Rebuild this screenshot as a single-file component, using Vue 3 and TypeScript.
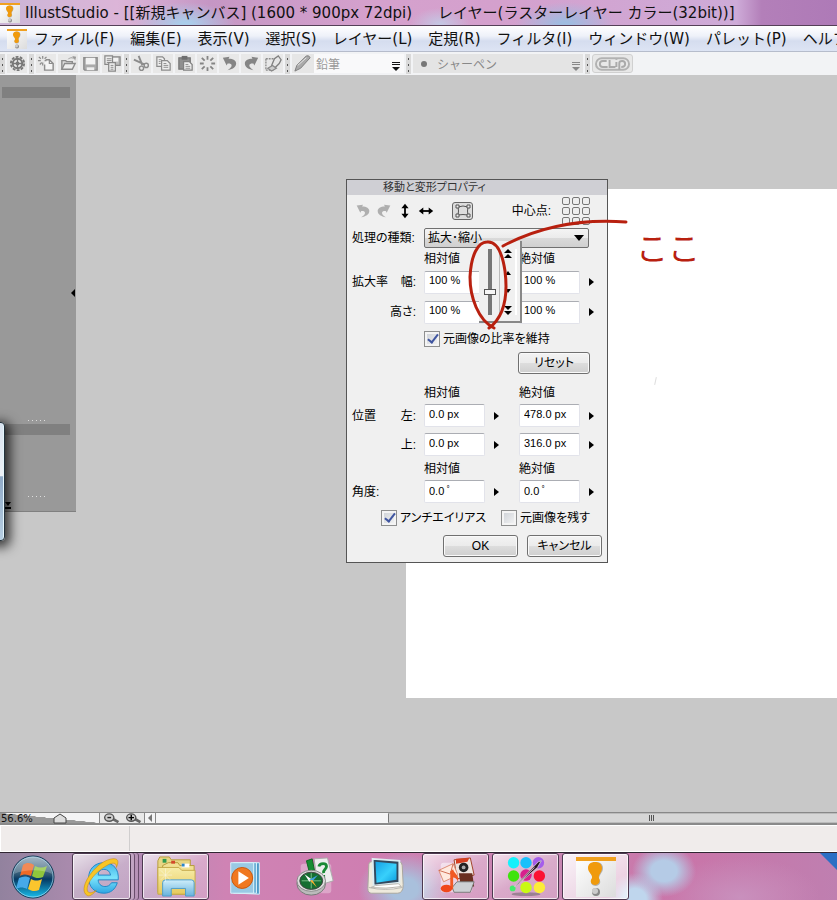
<script setup lang="ts">
import { ref } from 'vue'

const menus = ['ファイル(F)', '編集(E)', '表示(V)', '選択(S)', 'レイヤー(L)', '定規(R)', 'フィルタ(I)', 'ウィンドウ(W)', 'パレット(P)', 'ヘルプ(H)']

interface Tool { icon: string; label: string }
const toolGroups: Tool[][] = [
  [{ icon: 'gear', label: '設定' }],
  [
    { icon: 'new', label: '新規' },
    { icon: 'open', label: '開く' },
    { icon: 'save', label: '保存' },
    { icon: 'saveas', label: '別名で保存' },
  ],
  [
    { icon: 'cut', label: '切り取り' },
    { icon: 'copy', label: 'コピー' },
    { icon: 'paste', label: '貼り付け' },
    { icon: 'burst', label: '消去' },
    { icon: 'undo', label: '取り消し' },
    { icon: 'redo', label: 'やり直し' },
    { icon: 'fill', label: '塗りつぶし' },
  ],
]

interface Row { group: string; name: string; rel: string; abs: string }
const scaleRows = ref<Row[]>([
  { group: '拡大率', name: '幅:', rel: '100 %', abs: '100 %' },
  { group: '', name: '高さ:', rel: '100 %', abs: '100 %' },
])
const positionRows = ref<Row[]>([
  { group: '位置', name: '左:', rel: '0.0 px', abs: '478.0 px' },
  { group: '', name: '上:', rel: '0.0 px', abs: '316.0 px' },
])
const angle = ref<Row>({ group: '角度:', name: '', rel: '0.0 ﾟ', abs: '0.0 ﾟ' })

const keepRatio = ref(true)
const antialias = ref(true)
const keepSource = ref(false)
const scale = ref(33)
const zoom = ref(57)

const tasks = [
  { icon: 'explorer', label: 'エクスプローラー', open: true },
  { icon: 'player', label: 'メディアプレーヤー', open: false },
  { icon: 'compass', label: 'ナビ', open: false },
  { icon: 'monitor', label: 'コンピューター', open: false },
  { icon: 'media', label: 'メディア', open: true },
  { icon: 'paint', label: 'ペイント', open: true },
  { icon: 'illust', label: 'IllustStudio', open: true },
]
</script>

<template>
  <div class="desktop">
    <svg class="defs" aria-hidden="true">
      <defs>
        <linearGradient id="gOrb" x1="0" y1="0" x2="0" y2="1">
          <stop offset="0" stop-color="#8fa6b8" /><stop offset=".45" stop-color="#2b5572" />
          <stop offset=".55" stop-color="#063a63" /><stop offset="1" stop-color="#18c0ee" />
        </linearGradient>
        <linearGradient id="gPaper" x1="0" y1="0" x2="1" y2="1">
          <stop offset="0" stop-color="#fff" /><stop offset="1" stop-color="#dcdcdc" />
        </linearGradient>
        <linearGradient id="gIe" x1="0" y1="0" x2="0" y2="1">
          <stop offset="0" stop-color="#3fb2e8" /><stop offset=".5" stop-color="#7be4fb" /><stop offset="1" stop-color="#2fa5e2" />
        </linearGradient>
        <linearGradient id="gFolder" x1="0" y1="0" x2="0" y2="1">
          <stop offset="0" stop-color="#f7eda9" /><stop offset="1" stop-color="#e6c95c" />
        </linearGradient>
        <linearGradient id="gScreen" x1="0" y1="0" x2="1" y2="1">
          <stop offset="0" stop-color="#16a0e4" /><stop offset=".55" stop-color="#38d0fb" /><stop offset="1" stop-color="#0c9ee0" />
        </linearGradient>
        <linearGradient id="gGlass" x1="0" y1="0" x2="0" y2="1">
          <stop offset="0" stop-color="#cfeefb" /><stop offset="1" stop-color="#66b2dc" />
        </linearGradient>
      </defs>

      <symbol id="illust" viewBox="0 0 40 40">
        <rect width="40" height="40" fill="url(#gPaper)" />
        <rect width="40" height="4" fill="#f0a020" />
        <path d="M13 11c0-4 3-6 7-6s7 2 7 6c0 5-4 6-4 11 2 2 2 6-3 7-5 0-6-4-4-7 1-5-3-6-3-11z" fill="#777" opacity=".5" />
        <path d="M12 11c0-4 3-6 7-6s7 2 7 6c0 5-4 6-3 10 2 4-1 7-4 7s-6-3-3-7c1-4-4-5-4-10z" fill="#f09a0c" />
        <circle cx="20" cy="35" r="4" fill="#888" /><circle cx="19" cy="34" r="3" fill="#ccc" />
      </symbol>

      <symbol id="gear" viewBox="0 0 20 20">
        <circle cx="10" cy="10" r="5" fill="none" stroke="#777" stroke-width="2" />
        <circle cx="10" cy="10" r="7" fill="none" stroke="#777" stroke-width="2" stroke-dasharray="3 1.4" />
        <path d="M10 5v10M5 10h10" stroke="#777" stroke-width="1.4" /><circle cx="10" cy="10" r="2" fill="#777" />
      </symbol>
      <symbol id="new" viewBox="0 0 20 20">
        <path d="M9 6h4l4 4v7H8v-6" fill="#f4f4f4" stroke="#8c8c8c" stroke-width="1.5" />
        <path d="M13 6v4h4M6 2v3M6 9v3M1 7h3M8 7h2M2 3l2 2M10 3L8 5M3 11l2-2" fill="none" stroke="#8c8c8c" stroke-width="1.3" />
      </symbol>
      <symbol id="open" viewBox="0 0 20 20">
        <path d="M3 16V7h4l1 1h6v2" fill="#ddd" stroke="#8c8c8c" stroke-width="1.5" />
        <path d="M3 16l3-6h11l-3 6z" fill="#eee" stroke="#8c8c8c" stroke-width="1.5" />
        <path d="M9 6c2-3 5-3 6-2l-1-2 4 1-1 4-1-2c-2-1-4-1-7 1z" fill="#999" />
      </symbol>
      <symbol id="save" viewBox="0 0 20 20">
        <path d="M3 4h14v13H4l-1-1z" fill="#aaa" stroke="#8c8c8c" stroke-width="1.5" />
        <path d="M5 4h10v7H5z" fill="#f2f2f2" /><path d="M6 14h8v3H6z" fill="#eee" />
      </symbol>
      <symbol id="saveas" viewBox="0 0 20 20">
        <path d="M7 3h11v9h-5" fill="#bbb" stroke="#888" stroke-width="1.3" /><path d="M10 4h6v4h-6z" fill="#f2f2f2" />
        <path d="M2 2h8v9H2z" fill="#eee" stroke="#888" stroke-width="1.3" /><path d="M4 5h5M4 7h5M4 9h4" stroke="#888" />
        <path d="M6 9h7v9H6z" fill="#eee" stroke="#888" stroke-width="1.3" /><path d="M8 12h3M8 14h3M8 16h3" stroke="#888" />
      </symbol>
      <symbol id="cut" viewBox="0 0 20 20">
        <path d="M7 2l4 10M2 6l11 5" stroke="#8c8c8c" stroke-width="2" fill="none" />
        <circle cx="15" cy="12" r="2.2" fill="none" stroke="#8c8c8c" stroke-width="1.5" />
        <circle cx="10" cy="15" r="2.2" fill="none" stroke="#8c8c8c" stroke-width="1.5" />
      </symbol>
      <symbol id="copy" viewBox="0 0 20 20">
        <path d="M3 3h6l2 2v8H3z" fill="#eee" stroke="#8c8c8c" stroke-width="1.3" />
        <path d="M8 7h6l3 3v7H8z" fill="#eee" stroke="#8c8c8c" stroke-width="1.3" />
        <path d="M5 6h3M5 8h2M5 10h2M10 10h3M10 12h5M10 14h5" stroke="#8c8c8c" />
      </symbol>
      <symbol id="paste" viewBox="0 0 20 20">
        <path d="M3 4h12v12H3z" fill="#8f8f8f" stroke="#777" stroke-width="1.3" /><path d="M6 2h6v4H6z" fill="#6f6f6f" />
        <path d="M8 8h6l3 3v6H8z" fill="#eee" stroke="#808080" stroke-width="1.3" /><path d="M10 11h3M10 13h5M10 15h5" stroke="#8c8c8c" />
      </symbol>
      <symbol id="burst" viewBox="0 0 20 20">
        <path d="M10 2v4M10 14v4M2 10h4M14 10h4M4 4l3 3M13 13l3 3M16 4l-3 3M4 16l3-3" stroke="#858585" stroke-width="1.9" fill="none" />
      </symbol>
      <symbol id="undo" viewBox="0 0 20 20">
        <path d="M3 4l7-1-1 2c5 0 8 2 8 5 0 4-4 6-9 7 3-2 5-4 4-6-1-1-2-1-4-1l-1 2z" fill="#858585" />
      </symbol>
      <symbol id="redo" viewBox="0 0 20 20">
        <path d="M17 4l-7-1 1 2c-5 0-8 2-8 5 0 4 4 6 9 7-3-2-5-4-4-6 1-1 2-1 4-1l1 2z" fill="#858585" />
      </symbol>
      <symbol id="fill" viewBox="0 0 20 20">
        <path d="M2 5h10M2 5v12M2 17h8" stroke="#8c8c8c" stroke-width="1.4" stroke-dasharray="2 1" fill="none" />
        <path d="M8 12l3-7 4-3 3 4-2 4-5 5z" fill="#e6e6e6" stroke="#808080" stroke-width="1.4" />
        <path d="M4 15l5-3 4 3-5 3z" fill="#ccc" stroke="#888" stroke-width="1.3" />
      </symbol>

      <symbol id="mag" viewBox="0 0 18 12">
        <path d="M9 6l7 4" stroke="#666" stroke-width="3" /><ellipse cx="6" cy="5" rx="5" ry="4" fill="#ccc" stroke="#555" stroke-width="1.5" />
      </symbol>

      <symbol id="orb" viewBox="0 0 44 44">
        <circle cx="22" cy="22" r="21" fill="url(#gOrb)" stroke="#163b58" />
        <circle cx="22" cy="22" r="20" fill="none" stroke="#a9d8ee" stroke-opacity=".7" />
        <path d="M12 10c4-3 8-2 11 0l-3 11c-4-2-8-2-11 0z" fill="#ee6a27" />
        <path d="M24 11c4 2 8 2 12 0l-4 11c-4 2-8 1-11-1z" fill="#8fc63c" />
        <path d="M8 23c4-2 8-2 11 0l-3 11c-4-2-7-2-11 0z" fill="#46a9e9" />
        <path d="M20 24c4 2 7 2 11 0l-3 11c-4 2-8 1-11-1z" fill="#fbc52d" />
        <path d="M3 19C4 8 13 2 22 2s18 6 19 17c-9-5-27-5-38 0z" fill="#fff" opacity=".22" />
      </symbol>
      <symbol id="ie" viewBox="0 0 44 44">
        <path d="M24 7c10 0 16 7 15 18H18c0 4 3 7 7 7 3 0 5-1 7-4h6c-2 7-7 11-14 11-10 0-16-7-16-16S14 7 24 7zM18 20h13c-1-4-3-6-7-6s-6 2-6 6z" fill="url(#gIe)" stroke="#1f86c6" />
        <path d="M6 41C-3 35 11 12 26 5c9-4 16-3 11 7 1-5-4-6-10-2C14 17 4 31 7 37c2 3 6 1 9-1-4 5-8 7-10 5z" fill="#f8c526" stroke="#c88b10" stroke-width=".6" />
      </symbol>
      <symbol id="explorer" viewBox="0 0 44 44">
        <path d="M3 5l2-4h10l2 3h20v34H3z" fill="#e8d684" stroke="#b49a3c" />
        <path d="M8 3h4v4H8z" fill="#2f9a50" /><path d="M14 7h10l2 3h15v30H8V10z" fill="#f1e093" stroke="#b49a3c" />
        <path d="M17 5h4v3h-4z" fill="#d4472a" /><path d="M28 8h8v4h-8z" fill="#fff" /><path d="M28 8h3v3h-3z" fill="#2b86c8" />
        <path d="M3 12h22l3 3h14v25H3z" fill="url(#gFolder)" stroke="#c4a848" />
        <path d="M8 42V28q0-3 3-3h27q3 0 3 3v14h-9v-8H17v8z" fill="url(#gGlass)" stroke="#4d9cc8" />
        <path d="M11 13v14M4 20h14M6 15l10 10M16 15L6 25" stroke="#fff" stroke-width=".6" opacity=".7" />
      </symbol>
      <symbol id="player" viewBox="0 0 44 44">
        <path d="M12 8l24-1v33l-22-1z" fill="#4d99c8" stroke="#d9f1fb" /><path d="M9 7h24v32H9z" fill="#70b2d8" stroke="#d9f1fb" />
        <path d="M6 7h24v32H6z" fill="#99c9e4" stroke="#d9f1fb" />
        <circle cx="18" cy="23" r="11" fill="#f07820" stroke="#c95508" /><path d="M14 16l11 7-11 7z" fill="#fff" />
      </symbol>
      <symbol id="compass" viewBox="0 0 44 44">
        <rect x="6" y="8" width="32" height="31" rx="3" fill="#fff" opacity=".3" />
        <path d="M20 3l14-1 6 24-16 5z" fill="#eee" stroke="#aaa" />
        <path d="M12 5l6-2 3 15-5 3z" fill="#178c32" stroke="#0e6521" />
        <path d="M25 11c1-4 8-4 8 0 0 3-4 3-3 7M30 20v3" stroke="#1a8a35" stroke-width="3" fill="none" />
        <ellipse cx="17" cy="29" rx="15" ry="12" fill="#bbb" stroke="#777" /><ellipse cx="17" cy="26" rx="15" ry="11" fill="#ddd" stroke="#888" />
        <ellipse cx="17" cy="26" rx="12" ry="9" fill="#156e31" stroke="#444" />
        <path d="M17 18v16M7 26h20" stroke="#7cc08b" /><path d="M10 19l8 6-3 2z" fill="#fff" /><path d="M24 20l-6 7-3-2z" fill="#3da0e0" /><path d="M16 26l7 7-5-8z" fill="#ffb02d" />
      </symbol>
      <symbol id="monitor" viewBox="0 0 44 44">
        <path d="M4 9q0-3 3-3h28q4 0 4 4l1 20q0 9-6 9H7q-4 0-4-5z" fill="#eeeadd" stroke="#a8a59c" />
        <path d="M8 3l28 2v23L9 31z" fill="#33495e" stroke="#dcecf2" stroke-width="2" /><path d="M11 6l22 2v17l-21 3z" fill="url(#gScreen)" />
        <path d="M4 33q17 4 35 0M11 31l24-2 3 3q-16 3-32 1z" fill="#fff" stroke="#b8b5ad" />
      </symbol>
      <symbol id="media" viewBox="0 0 44 44">
        <rect x="6" y="7" width="33" height="31" rx="3" fill="#fff" opacity=".5" />
        <path d="M20 4l17-2 4 18-18 4z" fill="#eee4df" stroke="#9d3f25" /><path d="M22 3l14-1-2 4-12 2z" fill="#d63f20" />
        <circle cx="30" cy="12" r="5" fill="#222" /><circle cx="30" cy="12" r="2" fill="#aaa" />
        <path d="M4 15l15-7 5 12-15 7z" fill="#ffe9df" stroke="#da8b72" /><path d="M4 15l12 4 3-11" fill="none" stroke="#cf6b50" />
        <path d="M25 18l14 0 2 14H27z" fill="#6a2f20" /><path d="M18 33l5-6h18l-4 11H20z" fill="#cdd0d4" stroke="#777" />
        <path d="M16 34V16l3-2c1 5 7 6 5 13-1-4-4-4-5-5v13" fill="#f15a24" /><ellipse cx="12" cy="34" rx="6" ry="4" fill="#f0481c" />
      </symbol>
      <symbol id="paint" viewBox="0 0 44 44">
        <ellipse cx="22" cy="40" rx="15" ry="2" fill="#555" opacity=".45" />
        <circle cx="9" cy="7" r="6" fill="#16f0fb" /><circle cx="22" cy="7" r="6" fill="#19c0fb" /><circle cx="35" cy="7" r="6" fill="#a45dea" />
        <circle cx="9" cy="21" r="6" fill="#3ee30c" /><circle cx="22" cy="20" r="6" fill="#d8208d" /><circle cx="36" cy="21" r="6" fill="#fb1233" />
        <circle cx="8" cy="34" r="3" fill="#43ec6d" /><circle cx="22" cy="33" r="6" fill="#c9fb13" /><circle cx="36" cy="33" r="6" fill="#fcec38" />
        <path d="M10 32L35 6l3-1-4 7-22 19z" fill="#24131f" stroke="#ddd" stroke-width=".8" /><path d="M15 28L31 12" stroke="#c9a5b9" />
      </symbol>
    </svg>

    <header class="titlebar">
      <svg class="title-icon"><use href="#illust" /></svg>
      <h1><span>IllustStudio - [[新規キャンバス] (1600 * 900px 72dpi)</span><span>レイヤー(ラスターレイヤー カラー(32bit))]</span></h1>
    </header>

    <nav class="menubar">
      <svg class="title-icon"><use href="#illust" /></svg>
      <button v-for="m in menus" :key="m" type="button">{{ m }}</button>
    </nav>

    <div class="toolbar">
      <div v-for="(g, i) in toolGroups" :key="i" class="tool-group">
        <button v-for="t in g" :key="t.icon" type="button" :aria-label="t.label"><svg><use :href="'#' + t.icon" /></svg></button>
      </div>
      <div class="tool-group">
        <button type="button" class="preset pencil">
          <svg class="pen" viewBox="0 0 20 20"><path d="M2 18l2-6L14 2q3-1 4 2L8 15z" fill="#aaa" stroke="#7c7c7c" /><path d="M5 12l9-8" stroke="#e6e6e6" /></svg>
          <span>鉛筆</span>
          <svg class="caret" viewBox="0 0 8 9"><path d="M0 .5h8M0 2.5h8" stroke="#111" /><path d="M0 5h8L4 9z" fill="#111" /></svg>
        </button>
      </div>
      <div class="tool-group">
        <button type="button" class="preset sharp">
          <i class="dot"></i><span>シャーペン</span>
          <svg class="caret" viewBox="0 0 8 9"><path d="M0 .5h8M0 2.5h8" stroke="#888" /><path d="M0 5h8L4 9z" fill="#888" /></svg>
        </button>
      </div>
      <div class="tool-group">
        <button type="button" class="clip" aria-label="CLIP">
          <svg viewBox="0 0 36 16"><rect x="1" y="2" width="34" height="12" rx="6" fill="none" stroke="#b2b2b2" stroke-width="2" /><path d="M12 5H8q-3 0-3 3t3 3h5M15 4v7h6M22 6v5M22 3v1M25 14V7q0-2 3-2 3 0 3 3t-4 3" fill="none" stroke="#aaa" stroke-width="2" /></svg>
        </button>
      </div>
    </div>

    <main class="workspace">
      <section class="canvas"><i class="speck"></i></section>

      <aside class="dock">
        <div class="dock-body">
          <div class="dock-bar"></div>
          <svg class="collapse" viewBox="0 0 4 8"><path d="M4 0v8L0 4z" /></svg>
          <div class="dock-dots"><i v-for="n in 5" :key="n"></i></div>
        </div>
        <div class="dock-body low">
          <div class="dock-bar"></div>
          <div class="dock-dots"><i v-for="n in 5" :key="n"></i></div>
        </div>
        <svg class="dock-end" viewBox="0 0 6 7"><path d="M0 0h6L3 4zM0 5h6v2H0z" /></svg>
      </aside>
      <div class="edge-tab"></div>

      <form class="dialog" @submit.prevent>
        <h2>移動と変形プロパティ</h2>
        <div class="tools">
          <button type="button" aria-label="取り消し"><svg class="faded"><use href="#undo" /></svg></button>
          <button type="button" aria-label="やり直し"><svg class="faded"><use href="#redo" /></svg></button>
          <button type="button" aria-label="上下反転"><svg viewBox="0 0 20 20"><path d="M10 5v10" stroke="#000" stroke-width="2" /><path d="M6 7l4-5 4 5zM6 13l4 5 4-5z" /></svg></button>
          <button type="button" aria-label="左右反転"><svg viewBox="0 0 20 20"><path d="M5 10h10" stroke="#000" stroke-width="2" /><path d="M7 6l-5 4 5 4zM13 6l5 4-5 4z" /></svg></button>
          <button type="button" class="frame" aria-label="変形枠"><svg viewBox="0 0 18 16"><path d="M4 4q5-2 10 0-1 4 0 8-5-1-10 0 1-4 0-8z" fill="none" stroke="#555" /><path d="M2 2h3v3H2zM13 2h3v3h-3zM2 11h3v3H2zM13 11h3v3h-3z" fill="#eee" stroke="#555" /></svg></button>
          <span class="center-label">中心点:</span>
          <div class="anchors"><button v-for="n in 9" :key="n" type="button" :aria-label="'中心点' + n"></button></div>
        </div>

        <div class="row type-row">
          <label for="kind">処理の種類:</label>
          <div class="select-box">
            <select id="kind"><option>拡大･縮小</option></select>
            <svg viewBox="0 0 10 6"><path d="M0 0h10L5 6z" /></svg>
          </div>
        </div>

        <div class="row head"><span></span><span>相対値</span><span>絶対値</span></div>
        <div v-for="(r, i) in scaleRows" :key="'s' + i" class="row field tall">
          <label :for="'s' + i"><span>{{ r.group }}</span><span>{{ r.name }}</span></label>
          <div class="cell"><input :id="'s' + i" v-model="r.rel" type="text" /></div>
          <div class="cell"><input v-model="r.abs" type="text" :aria-label="r.name + '絶対値'" /><button type="button" class="more" aria-label="調整"></button></div>
        </div>
        <div class="check ratio"><label><input v-model="keepRatio" type="checkbox" /><i></i>元画像の比率を維持</label></div>
        <div class="reset"><button type="button" class="push">リセット</button></div>

        <div class="row head next"><span></span><span>相対値</span><span>絶対値</span></div>
        <div v-for="(r, i) in positionRows" :key="'p' + i" class="row field">
          <label :for="'p' + i"><span>{{ r.group }}</span><span>{{ r.name }}</span></label>
          <div class="cell"><input :id="'p' + i" v-model="r.rel" type="text" /><button type="button" class="more" aria-label="調整"></button></div>
          <div class="cell"><input v-model="r.abs" type="text" :aria-label="r.name + '絶対値'" /><button type="button" class="more" aria-label="調整"></button></div>
        </div>
        <div class="row head"><span></span><span>相対値</span><span>絶対値</span></div>
        <div class="row field">
          <label for="angle">{{ angle.group }}</label>
          <div class="cell"><input id="angle" v-model="angle.rel" type="text" /><button type="button" class="more" aria-label="調整"></button></div>
          <div class="cell"><input v-model="angle.abs" type="text" aria-label="角度絶対値" /><button type="button" class="more" aria-label="調整"></button></div>
        </div>
        <div class="check pair">
          <label><input v-model="antialias" type="checkbox" /><i></i>アンチエイリアス</label>
          <label><input v-model="keepSource" type="checkbox" /><i></i>元画像を残す</label>
        </div>
        <div class="actions"><button type="submit" class="push">OK</button><button type="button" class="push">キャンセル</button></div>

        <div class="popup">
          <input v-model="scale" type="range" min="0" max="100" aria-label="拡大率" />
          <div class="steps">
            <button type="button" aria-label="大きく増やす"><svg viewBox="0 0 8 10"><path d="M0 4l4-4 4 4zM0 9l4-4 4 4z" /></svg></button>
            <button type="button" aria-label="増やす"><svg viewBox="0 0 8 10"><path d="M1 7l3-4 3 4z" /></svg></button>
            <button type="button" aria-label="減らす"><svg viewBox="0 0 8 10"><path d="M1 3l3 4 3-4z" /></svg></button>
            <button type="button" aria-label="大きく減らす"><svg viewBox="0 0 8 10"><path d="M0 1l4 4 4-4zM0 6l4 4 4-4z" /></svg></button>
          </div>
        </div>
      </form>

      <svg class="scribble" viewBox="0 0 170 115" fill="none" stroke="#b8200f" stroke-linecap="round">
        <path d="M28 111C12 103 4 80 4 60 5 38 12 25 21 25c9-1 15 9 18 29 3 24 0 45-16 57" stroke-width="3" />
        <path d="M37 29C67 13 105 1 160 5" stroke-width="3" />
      </svg>
      <p class="note">ここ</p>
    </main>

    <div class="viewbar">
      <label class="zoom"><span>56.6%</span><input v-model="zoom" type="range" aria-label="ズーム" />
        <svg viewBox="0 0 14 11"><path d="M1 10V5l6-4 6 4v5z" fill="#ddd" stroke="#444" /></svg>
      </label>
      <div class="mags">
        <button type="button" aria-label="縮小"><svg viewBox="0 0 18 12"><use href="#mag" /><path d="M4 5h4" stroke="#222" stroke-width="1.5" /></svg></button>
        <button type="button" aria-label="拡大"><svg viewBox="0 0 18 12"><use href="#mag" /><path d="M3 5h6M6 2v6" stroke="#000" stroke-width="1.5" /></svg></button>
      </div>
      <button type="button" class="scroll-left" aria-label="左へスクロール"><svg viewBox="0 0 4 8"><path d="M4 0v8L0 4z" fill="#777" /></svg></button>
      <div class="track"><div class="thumb"><i></i><i></i><i></i></div></div>
    </div>
    <div class="status"><div></div></div>

    <footer class="taskbar">
      <button type="button" class="start" aria-label="スタート"><svg><use href="#orb" /></svg></button>
      <button type="button" class="task open stacked" aria-label="Internet Explorer"><svg><use href="#ie" /></svg></button>
      <button v-for="t in tasks" :key="t.icon" type="button" class="task" :class="{ open: t.open, active: t.icon === 'illust' }" :aria-label="t.label"><svg><use :href="'#' + t.icon" /></svg></button>
    </footer>
  </div>
</template>

<style>
body { margin: 0; overflow: hidden; background: #c8c8c8; }
</style>

<style scoped>
.desktop { display: flex; flex-direction: column; height: 100vh; overflow: hidden; font-family: "DejaVu Sans", "Noto Sans CJK JP", sans-serif; color: #111; }
.desktop *, .desktop *::before { box-sizing: border-box; }
.defs { position: absolute; width: 0; height: 0; }
button { padding: 0; margin: 0; border: 0; background: none; font: inherit; color: inherit; }
svg { display: block; flex: none; }
h1, h2, p { margin: 0; font-weight: 400; }

.titlebar { flex: none; display: flex; align-items: center; gap: 5px; height: 26px; overflow: hidden; border-bottom: 1px solid #554058;
  background: radial-gradient(ellipse 50px 22px at 185px 24px, #aacdea 10%, transparent), radial-gradient(ellipse 50px 22px at 565px 24px, #9fbce0 10%, transparent), radial-gradient(ellipse 30px 16px at 440px 24px, #c4c8e4, transparent), linear-gradient(90deg, #cbb5d6, #dcb5d8 14%, #c596c4 25%, #d5a1cd 45%, #d4a0cd 60%, #ceabd8 88%, #b37fb9 91%, #ae7ab7); }
.title-icon { width: 20px; height: 22px; }
.titlebar h1 { display: flex; gap: 26px; font-size: 15px; line-height: 24px; white-space: nowrap; }
.menubar { flex: none; display: flex; align-items: center; gap: 16px; height: 26px; padding-left: 7px; overflow: hidden; background: linear-gradient(#fff, #eef1f9 40%, #d5ddef 60%, #dde4f4); border-bottom: 1px solid #b6bccb; font-size: 15px; line-height: 24px; white-space: nowrap; }
.menubar .title-icon { margin-right: -9px; }

.toolbar { flex: none; display: flex; align-items: center; height: 23px; background: #f2f3f5; overflow: hidden; }
.tool-group { display: flex; align-items: center; gap: 2px; height: 20px; padding: 0 2px 0 7px; background: radial-gradient(circle, #555 1px, transparent 1px) 0 2px / 5px 6px no-repeat, radial-gradient(circle, #555 1px, transparent 1px) 0 8px / 5px 6px no-repeat, radial-gradient(circle, #555 1px, transparent 1px) 0 14px / 5px 6px no-repeat, linear-gradient(#d9d9d9, #d9d9d9) 0 0 / 5px 20px no-repeat; }
.tool-group > button { display: flex; align-items: center; justify-content: center; width: 20px; height: 19px; background: #e8e8e8; }
.tool-group > button svg { width: 19px; height: 19px; }
.tool-group > .preset { justify-content: flex-start; font-size: 12px; color: #999; }
.tool-group > .preset .caret { width: 8px; height: 9px; margin: 5px 0 0 auto; }
.tool-group > .pencil { width: 112px; gap: 4px; background: linear-gradient(90deg, #e6e6e6 22px, #f9f9fa 22px); padding: 0 4px 0 1px; }
.tool-group > .sharp { width: 170px; gap: 10px; padding: 0 3px 0 8px; background: #e4e4e4; color: #888; }
.dot { width: 6px; height: 6px; border-radius: 50%; background: #777; }
.tool-group > .clip { width: 41px; border: 1px solid #d0d0d0; border-radius: 3px; }
.tool-group > .clip svg { width: 35px; height: 16px; }

.workspace { position: relative; flex: 1; min-height: 0; background: #c8c8c8; overflow: hidden; }
.canvas { position: absolute; left: 406px; right: 0; top: 114px; bottom: 114px; background: #fff; }
.speck { position: absolute; left: 249px; top: 188px; width: 1px; height: 8px; background: #ddd; transform: rotate(12deg); }
.dock { position: relative; display: flex; flex-direction: column; width: 76px; height: 437px; padding: 12px 6px 0 2px; background: #999; border-bottom: 1px solid #808080; }
.dock-body { display: flex; flex-direction: column; justify-content: space-between; height: 337px; padding-bottom: 3px; }
.dock-body.low { height: 76px; }
.dock-bar { height: 11px; background: #808080; }
.dock-dots { display: flex; gap: 3px; padding-left: 26px; }
.dock-dots i { width: 1px; height: 1px; background: #ddd; }
.collapse { position: absolute; right: 1px; top: 214px; width: 4px; height: 8px; }
.dock-end { position: absolute; left: 5px; bottom: 2px; width: 6px; height: 7px; }
.edge-tab { position: absolute; left: -10px; top: 347px; width: 15px; height: 119px; border: 1px solid #24323c; border-radius: 4px; background: linear-gradient(#d8e2ee, #edf1f6 45%, #8fa9c6 46%, #b7cfe3); box-shadow: inset -1px 0 #e4f5fb, 2px 3px 12px 3px rgba(0, 0, 0, .75); }

.dialog { position: absolute; left: 346px; top: 104px; width: 262px; border: 1px solid #555; background: #f0f0f0; font-family: "Liberation Sans", "Noto Sans CJK JP", sans-serif; font-size: 12px; line-height: 16px; font-feature-settings: "palt"; color: #000; white-space: nowrap; }
.dialog h2 { height: 15px; padding-left: 36px; background: #cfcfd4; font-size: 11px; line-height: 15px; color: #333; }
.tools { display: flex; align-items: center; height: 32px; padding: 0 17px 0 7px; gap: 3px; }
.tools > button svg { width: 18px; height: 18px; }
.tools .faded { opacity: .6; }
.tools > .frame { display: flex; align-items: center; justify-content: center; width: 21px; height: 18px; margin-left: 14px; border: 1px solid #666; border-radius: 3px; background: #ddd; }
.tools > .frame svg { width: 18px; height: 16px; }
.center-label { margin-left: auto; margin-right: 8px; }
.anchors { display: grid; grid-template-columns: repeat(3, 8px); gap: 2px; }
.anchors button { height: 8px; border: 1px solid #777; border-radius: 2px; background: #eee; }
.row { display: grid; grid-template-columns: 72px 95px 1fr; align-items: center; padding-left: 5px; }
.type-row { height: 22px; grid-template-columns: 72px 165px; }
.select-box { display: grid; align-items: center; }
.select-box select { grid-area: 1 / 1; appearance: none; height: 20px; padding: 0 3px; border: 1px solid #707070; border-radius: 2px; background: linear-gradient(#f4f4f4, #ebebeb 50%, #dadada 51%, #d0d0d0); font: inherit; color: #000; }
.select-box svg { grid-area: 1 / 1; justify-self: end; width: 10px; height: 6px; margin-right: 5px; pointer-events: none; }
.head { height: 18px; align-items: end; }
.head.next { margin-top: 8px; }
.field { height: 29px; }
.field.tall { height: 30px; }
.field label { display: flex; justify-content: space-between; padding-right: 8px; }
.cell { display: flex; align-items: center; gap: 9px; }
.cell input { width: 61px; height: 23px; padding: 0 4px 4px; border: 1px solid #e2e3ea; border-top-color: #abadb3; border-radius: 2px; background: #fff; font: inherit; font-size: 11px; color: #000; }
.more { width: 0; height: 0; border: solid transparent; border-width: 4px 0 4px 5px; border-left-color: #000; }
.check { display: flex; align-items: center; height: 24px; }
.check.ratio { padding-left: 77px; }
.check.pair { padding: 0 17px 0 34px; justify-content: space-between; }
.check label { display: flex; align-items: center; gap: 3px; }
.check input { position: absolute; opacity: 0; }
.check i { width: 16px; height: 16px; border: 1px solid #8e8f8f; background: linear-gradient(135deg, #cbcfd5, #f6f6f6); box-shadow: inset 0 0 0 2px #f4f4f4; }
.check input:checked + i::before { content: ""; display: block; width: 6px; height: 11px; margin: 0 0 0 5px; border: solid #3f55a0; border-width: 0 2px 2px 0; transform: rotate(38deg); }
.reset { display: flex; justify-content: flex-end; height: 24px; align-items: center; padding-right: 17px; }
.push { height: 22px; width: 75px; border: 1px solid #707070; border-radius: 3px; background: linear-gradient(#f3f3f3, #ebebeb 50%, #dddddd 51%, #cfcfcf); box-shadow: inset 0 0 0 1px #fafafa; }
.reset .push { width: 72px; }
.actions { display: flex; justify-content: flex-end; align-items: center; gap: 9px; height: 32px; padding-right: 5px; }
.popup { position: absolute; left: 132px; top: 61px; display: flex; justify-content: space-between; width: 43px; height: 82px; padding: 8px 3px 6px 4px; background: #f0f0f0; border: solid #888; border-width: 0 2px 2px 0; }
.popup input { appearance: none; writing-mode: vertical-lr; direction: rtl; width: 13px; height: 66px; margin: 0; background: linear-gradient(#777, #777) center / 4px 100% no-repeat; }
.popup input::-webkit-slider-thumb { appearance: none; box-sizing: border-box; width: 12px; height: 6px; border: 1px solid #555; background: #f6f6f6; }
.steps { display: flex; flex-direction: column; justify-content: space-between; align-items: center; width: 18px; border-left: 1px solid #bbb; border-right: 2px solid #fff; }
.steps svg { width: 8px; height: 10px; }
.scribble { position: absolute; left: 466px; top: 142px; width: 170px; height: 115px; pointer-events: none; }
.note { position: absolute; left: 636px; top: 152px; font-size: 32px; line-height: 38px; color: #b8200f; font-family: "Noto Sans CJK JP", sans-serif; font-weight: 400; }

.viewbar { flex: none; display: flex; height: 13px; background: #f4f4f5; border-top: 1px solid #888; border-bottom: 2px solid #8a8a8a; }
.zoom { position: relative; width: 100px; border-right: 1px solid #888; background: linear-gradient(to top right, #999 50%, #f4f4f5 51%); font-size: 10px; line-height: 12px; }
.zoom span { padding-left: 1px; }
.zoom input { position: absolute; inset: 0; width: 100%; height: 10px; margin: 0; opacity: 0; }
.zoom svg { position: absolute; left: 53px; top: 0; width: 14px; height: 11px; }
.mags { display: flex; gap: 4px; width: 44px; padding-left: 3px; background: #e8e8e8; }
.mags svg { width: 18px; height: 11px; }
.scroll-left { display: flex; align-items: center; justify-content: center; width: 12px; border: solid #888; border-width: 0 1px; }
.scroll-left svg { width: 4px; height: 8px; }
.track { flex: 1; display: flex; justify-content: flex-end; }
.thumb { display: flex; align-items: center; justify-content: center; gap: 1px; width: 66%; padding-left: 78px; background: #d6d6d6; border-left: 1px solid #777; border-top: 1px solid #bbb; border-bottom: 1px solid #bbb; }
.thumb i { width: 1px; height: 6px; background: #555; }
.status { flex: none; height: 27px; background: #f0eceb; border: solid #fff; border-width: 1px 0 1px 1px; }
.status div { width: 129px; height: 100%; border-right: 1px solid #d0cece; }

.taskbar { flex: none; display: flex; gap: 3px; height: 48px; border-top: 1px solid #302632; overflow: hidden;
  background: linear-gradient(45deg, transparent 62%, #2c6fc4 64%) right top / 20px 26px no-repeat,
    radial-gradient(ellipse 32px 26px at 664px 18px, #b5cbe6 40%, transparent), radial-gradient(ellipse 28px 26px at 635px 46px, #bfd6ed 40%, transparent),
    radial-gradient(ellipse 46px 36px at 404px 36px, #a9c0dc 30%, transparent), radial-gradient(ellipse 80px 40px at 740px 44px, #c990bd, transparent),
    linear-gradient(90deg, #92829e, #a88aac 8%, #b38bb5 17%, #cf83b4 27%, #cf7eb1 45%, #c888b4 66%, #ca74a8 80%, #bf7fb0); }
.start { display: flex; justify-content: center; align-items: center; width: 69px; padding-right: 3px; }
.start svg { width: 44px; height: 44px; }
.task { display: flex; justify-content: center; align-items: center; flex: none; width: 67px; height: 47px; border: 1px solid transparent; border-radius: 3px; }
.task svg { width: 42px; height: 42px; }
.task.open { border-color: #4d3950; background: linear-gradient(150deg, rgba(255, 255, 255, .75), rgba(255, 255, 255, .3) 50%, rgba(255, 255, 255, .2)); box-shadow: inset 0 0 0 1px rgba(255, 255, 255, .7); }
.task.stacked { width: 59px; margin-right: 8px; box-shadow: inset 0 0 0 1px rgba(255, 255, 255, .7), 3px 0 #c2a5c3, 4px 0 #6a4d6c, 7px 0 #b793b7, 8px 0 #6a4d6c; }
.task.active { background: linear-gradient(150deg, rgba(255, 255, 255, .9), rgba(255, 255, 255, .55)); }
.task:last-child svg { width: 40px; height: 40px; }
</style>
